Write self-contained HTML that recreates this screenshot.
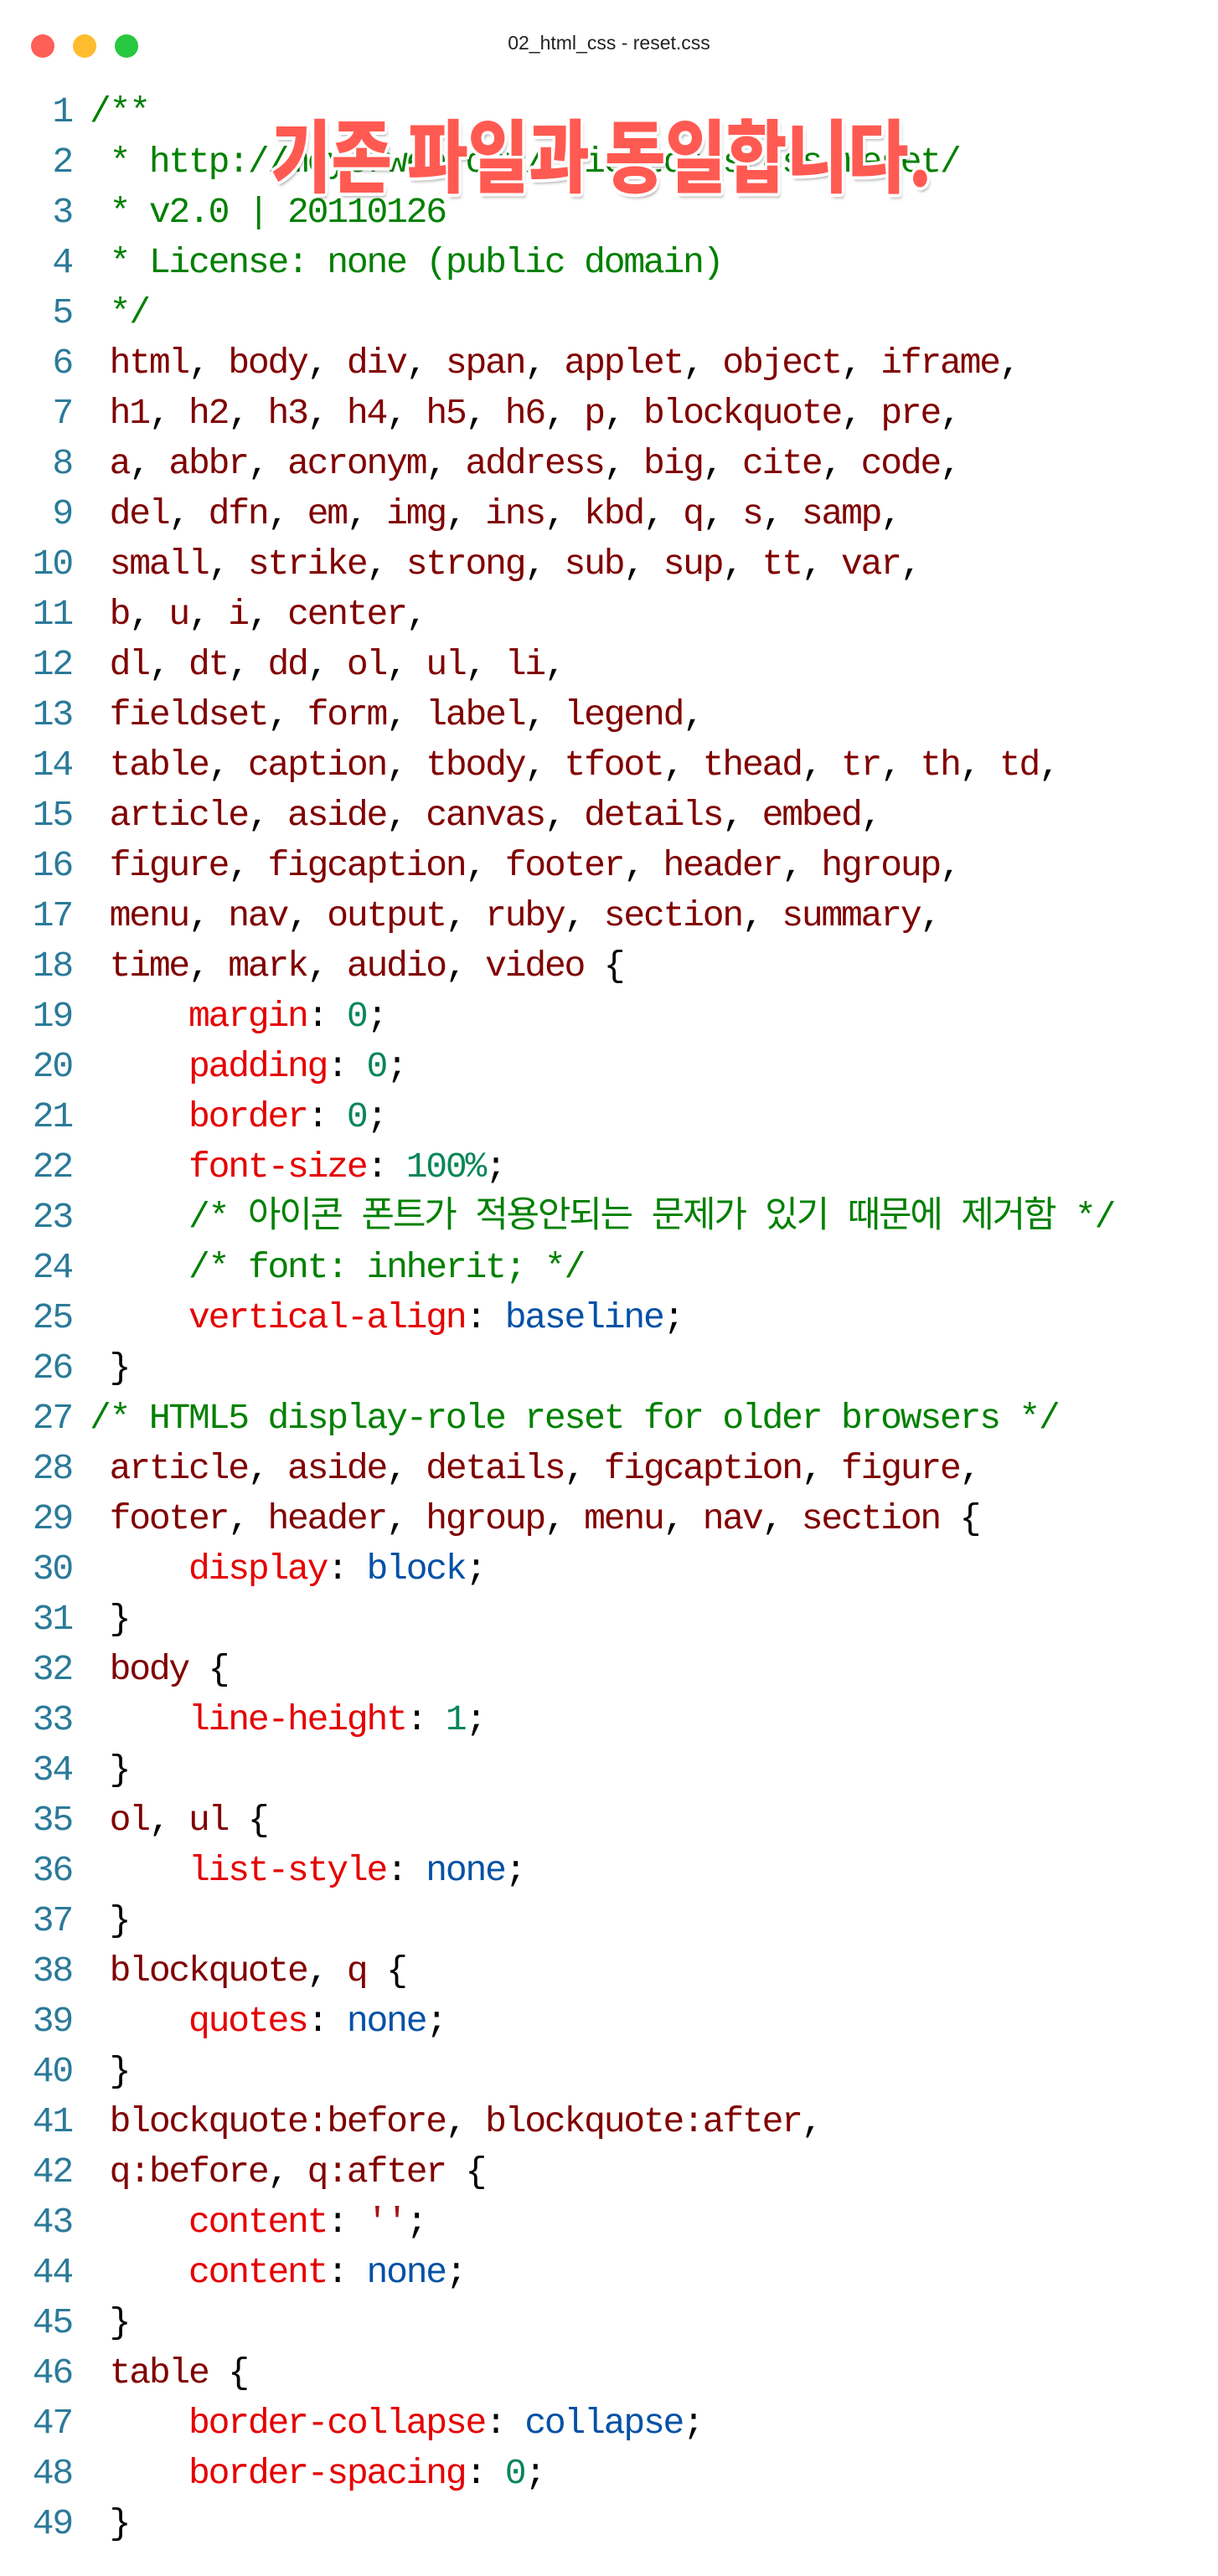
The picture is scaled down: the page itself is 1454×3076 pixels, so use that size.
<!DOCTYPE html>
<html><head><meta charset="utf-8">
<style>
html,body{margin:0;padding:0;background:#fff;width:1454px;height:3076px;overflow:hidden;position:relative}
.dot{position:absolute;top:41px;width:28px;height:28px;border-radius:50%}
.title{position:absolute;top:38px;left:0;width:1454px;text-align:center;font:23px "Liberation Sans",sans-serif;color:#222}
.code{position:absolute;top:104px;left:0;font-family:"Liberation Mono","Noto Sans CJK KR",monospace;font-size:43px;letter-spacing:-2.2px}
.l{height:60px;line-height:60px;position:relative}
.n{position:absolute;left:0;width:86px;text-align:right;color:#2b7a99}
.t{position:absolute;left:107px;white-space:pre}
.c{color:#008000}.s{color:#800000}.p{color:#e50000}.v{color:#0451a5}.g{color:#098658}.k{color:#000}
.ov{position:absolute;left:323px;top:122px;font-family:"Noto Sans CJK KR",sans-serif;font-weight:900;font-size:95px;line-height:120px;color:#ff5a52;white-space:nowrap;transform:scaleX(0.83);transform-origin:left top;
text-shadow:-3px -3px 0 #fff,3px -3px 0 #fff,-3px 3px 0 #fff,3px 3px 0 #fff,0 -4px 0 #fff,0 4px 0 #fff,-4px 0 0 #fff,4px 0 0 #fff,3px 5px 4px rgba(0,0,0,.35)}
</style></head><body>
<div class="dot" style="left:37px;background:#fe5f57"></div>
<div class="dot" style="left:87px;background:#febc2e"></div>
<div class="dot" style="left:137px;background:#28c840"></div>
<div class="title">02_html_css - reset.css</div>
<div class="code">
<div class="l"><span class="n">1</span><span class="t c">/**</span></div>
<div class="l"><span class="n">2</span><span class="t c"> * http://meyerweb.com/eric/tools/css/reset/</span></div>
<div class="l"><span class="n">3</span><span class="t c"> * v2.0 | 20110126</span></div>
<div class="l"><span class="n">4</span><span class="t c"> * License: none (public domain)</span></div>
<div class="l"><span class="n">5</span><span class="t c"> */</span></div>
<div class="l"><span class="n">6</span><span class="t s"> html<span class="k">,</span> body<span class="k">,</span> div<span class="k">,</span> span<span class="k">,</span> applet<span class="k">,</span> object<span class="k">,</span> iframe<span class="k">,</span></span></div>
<div class="l"><span class="n">7</span><span class="t s"> h1<span class="k">,</span> h2<span class="k">,</span> h3<span class="k">,</span> h4<span class="k">,</span> h5<span class="k">,</span> h6<span class="k">,</span> p<span class="k">,</span> blockquote<span class="k">,</span> pre<span class="k">,</span></span></div>
<div class="l"><span class="n">8</span><span class="t s"> a<span class="k">,</span> abbr<span class="k">,</span> acronym<span class="k">,</span> address<span class="k">,</span> big<span class="k">,</span> cite<span class="k">,</span> code<span class="k">,</span></span></div>
<div class="l"><span class="n">9</span><span class="t s"> del<span class="k">,</span> dfn<span class="k">,</span> em<span class="k">,</span> img<span class="k">,</span> ins<span class="k">,</span> kbd<span class="k">,</span> q<span class="k">,</span> s<span class="k">,</span> samp<span class="k">,</span></span></div>
<div class="l"><span class="n">10</span><span class="t s"> small<span class="k">,</span> strike<span class="k">,</span> strong<span class="k">,</span> sub<span class="k">,</span> sup<span class="k">,</span> tt<span class="k">,</span> var<span class="k">,</span></span></div>
<div class="l"><span class="n">11</span><span class="t s"> b<span class="k">,</span> u<span class="k">,</span> i<span class="k">,</span> center<span class="k">,</span></span></div>
<div class="l"><span class="n">12</span><span class="t s"> dl<span class="k">,</span> dt<span class="k">,</span> dd<span class="k">,</span> ol<span class="k">,</span> ul<span class="k">,</span> li<span class="k">,</span></span></div>
<div class="l"><span class="n">13</span><span class="t s"> fieldset<span class="k">,</span> form<span class="k">,</span> label<span class="k">,</span> legend<span class="k">,</span></span></div>
<div class="l"><span class="n">14</span><span class="t s"> table<span class="k">,</span> caption<span class="k">,</span> tbody<span class="k">,</span> tfoot<span class="k">,</span> thead<span class="k">,</span> tr<span class="k">,</span> th<span class="k">,</span> td<span class="k">,</span></span></div>
<div class="l"><span class="n">15</span><span class="t s"> article<span class="k">,</span> aside<span class="k">,</span> canvas<span class="k">,</span> details<span class="k">,</span> embed<span class="k">,</span></span></div>
<div class="l"><span class="n">16</span><span class="t s"> figure<span class="k">,</span> figcaption<span class="k">,</span> footer<span class="k">,</span> header<span class="k">,</span> hgroup<span class="k">,</span></span></div>
<div class="l"><span class="n">17</span><span class="t s"> menu<span class="k">,</span> nav<span class="k">,</span> output<span class="k">,</span> ruby<span class="k">,</span> section<span class="k">,</span> summary<span class="k">,</span></span></div>
<div class="l"><span class="n">18</span><span class="t s"> time<span class="k">,</span> mark<span class="k">,</span> audio<span class="k">,</span> video <span class="k">{</span></span></div>
<div class="l"><span class="n">19</span><span class="t k">     <span class="p">margin</span>: <span class="g">0</span>;</span></div>
<div class="l"><span class="n">20</span><span class="t k">     <span class="p">padding</span>: <span class="g">0</span>;</span></div>
<div class="l"><span class="n">21</span><span class="t k">     <span class="p">border</span>: <span class="g">0</span>;</span></div>
<div class="l"><span class="n">22</span><span class="t k">     <span class="p">font-size</span>: <span class="g">100%</span>;</span></div>
<div class="l"><span class="n">23</span><span class="t c">     /* 아이콘 폰트가 적용안되는 문제가 있기 때문에 제거함 */</span></div>
<div class="l"><span class="n">24</span><span class="t c">     /* font: inherit; */</span></div>
<div class="l"><span class="n">25</span><span class="t k">     <span class="p">vertical-align</span>: <span class="v">baseline</span>;</span></div>
<div class="l"><span class="n">26</span><span class="t k"> }</span></div>
<div class="l"><span class="n">27</span><span class="t c">/* HTML5 display-role reset for older browsers */</span></div>
<div class="l"><span class="n">28</span><span class="t s"> article<span class="k">,</span> aside<span class="k">,</span> details<span class="k">,</span> figcaption<span class="k">,</span> figure<span class="k">,</span></span></div>
<div class="l"><span class="n">29</span><span class="t s"> footer<span class="k">,</span> header<span class="k">,</span> hgroup<span class="k">,</span> menu<span class="k">,</span> nav<span class="k">,</span> section <span class="k">{</span></span></div>
<div class="l"><span class="n">30</span><span class="t k">     <span class="p">display</span>: <span class="v">block</span>;</span></div>
<div class="l"><span class="n">31</span><span class="t k"> }</span></div>
<div class="l"><span class="n">32</span><span class="t s"> body <span class="k">{</span></span></div>
<div class="l"><span class="n">33</span><span class="t k">     <span class="p">line-height</span>: <span class="g">1</span>;</span></div>
<div class="l"><span class="n">34</span><span class="t k"> }</span></div>
<div class="l"><span class="n">35</span><span class="t s"> ol<span class="k">,</span> ul <span class="k">{</span></span></div>
<div class="l"><span class="n">36</span><span class="t k">     <span class="p">list-style</span>: <span class="v">none</span>;</span></div>
<div class="l"><span class="n">37</span><span class="t k"> }</span></div>
<div class="l"><span class="n">38</span><span class="t s"> blockquote<span class="k">,</span> q <span class="k">{</span></span></div>
<div class="l"><span class="n">39</span><span class="t k">     <span class="p">quotes</span>: <span class="v">none</span>;</span></div>
<div class="l"><span class="n">40</span><span class="t k"> }</span></div>
<div class="l"><span class="n">41</span><span class="t s"> blockquote:before<span class="k">,</span> blockquote:after<span class="k">,</span></span></div>
<div class="l"><span class="n">42</span><span class="t s"> q:before<span class="k">,</span> q:after <span class="k">{</span></span></div>
<div class="l"><span class="n">43</span><span class="t k">     <span class="p">content</span>: <span style="color:#a31515">''</span>;</span></div>
<div class="l"><span class="n">44</span><span class="t k">     <span class="p">content</span>: <span class="v">none</span>;</span></div>
<div class="l"><span class="n">45</span><span class="t k"> }</span></div>
<div class="l"><span class="n">46</span><span class="t s"> table <span class="k">{</span></span></div>
<div class="l"><span class="n">47</span><span class="t k">     <span class="p">border-collapse</span>: <span class="v">collapse</span>;</span></div>
<div class="l"><span class="n">48</span><span class="t k">     <span class="p">border-spacing</span>: <span class="g">0</span>;</span></div>
<div class="l"><span class="n">49</span><span class="t k"> }</span></div>
</div>
<div class="ov">기존 파일과 동일합니다.</div>
</body></html>
